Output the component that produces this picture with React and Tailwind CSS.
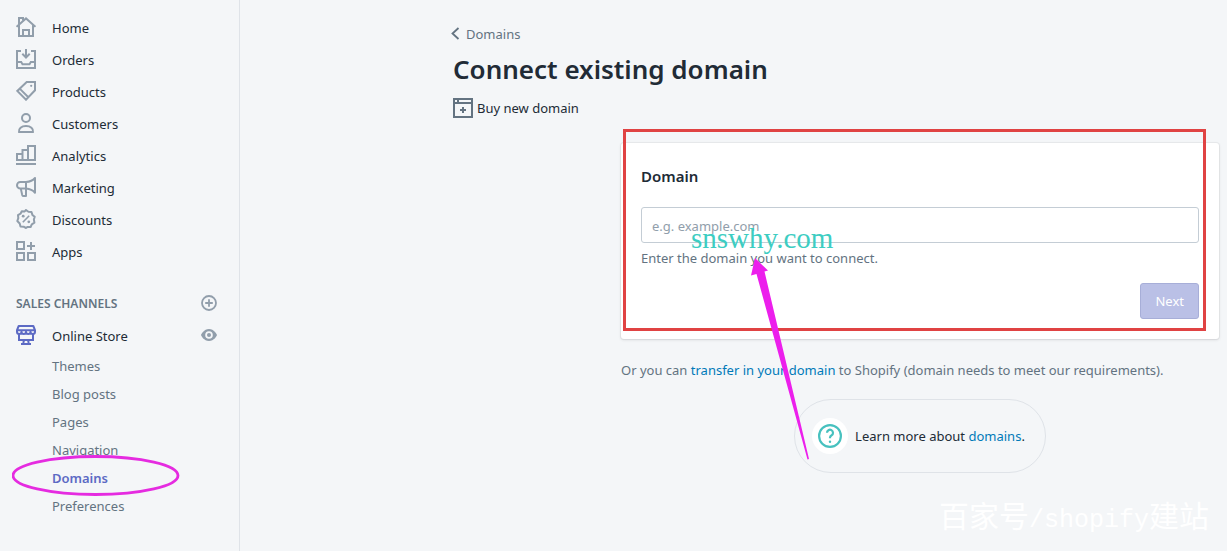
import React from "react";

function Icon({ children, className = "" }) {
  return (
    <svg
      viewBox="0 0 20 20"
      className={`w-5 h-5 shrink-0 ${className}`}
      fill="none"
      stroke="currentColor"
      strokeWidth="2"
      aria-hidden="true"
    >
      {children}
    </svg>
  );
}

const navItems = [
  {
    label: "Home",
    icon: (
      <>
        <path d="M.5 9.800 10 1.400l9.500 8.400M3 8v11h14V8" />
        <path d="M7 19v-6h6v6M3 7.500V1h4v2.500" />
      </>
    ),
  },
  {
    label: "Orders",
    icon: (
      <>
        <path d="M5 2H1v17h18V2h-4M1 13h4.200l1.300 2.200h7L14.800 13H19" />
        <path d="M10 0v8M6.300 4.800 10 8.500l3.700-3.700" />
      </>
    ),
  },
  {
    label: "Products",
    icon: (
      <>
        <path d="M10.700 1H19v8.300L10 18.700 1.300 9.900zM3.700 7.600l8.900 8.900" />
        <circle cx="15.200" cy="4.800" r="1.100" fill="currentColor" stroke="none" />
      </>
    ),
  },
  {
    label: "Customers",
    icon: (
      <>
        <circle cx="10" cy="5" r="4" />
        <path d="M3 19c-.6-3.600 2.400-6 7-6s7.600 2.400 7 6z" strokeLinejoin="round" />
      </>
    ),
  },
  {
    label: "Analytics",
    icon: <path d="M1 15V9h5.500v6M6.500 15V5H12v10M12 15V1h7v14zM0 15h13M0 19h20" />,
  },
  {
    label: "Marketing",
    icon: (
      <>
        <path d="M10 5H4.300a3.300 3.300 0 0 0 0 6.600H10zM10 5c4-.3 7-1.600 9-4v14.800c-2-2.500-5-3.900-9-4.200" strokeLinejoin="round" />
        <path d="M4.800 11.600 6.200 17.900c.2.800.8 1.100 1.500 1.100H10v-7.400" strokeLinejoin="round" />
      </>
    ),
  },
  {
    label: "Discounts",
    icon: (
      <>
        <path d="m10 1 2.400 1.700 3.100.3.900 2.900 2.300 1.900-.8 2.800.5 3.100-2.600 1.600-1.200 2.700-3-.1L10 19l-2.400-1.300-3.100-.3-.8-2.900L1.300 12l1-2.800L2 6.100l2.500-1.400L5.800 2.200l2.900.2z" strokeLinejoin="round" />
        <path d="m6.800 13.200 6.400-6.400" strokeWidth="1.600" />
        <circle cx="7.200" cy="7.200" r="1.400" fill="currentColor" stroke="none" />
        <circle cx="12.800" cy="12.800" r="1.400" fill="currentColor" stroke="none" />
      </>
    ),
  },
  {
    label: "Apps",
    icon: <path d="M1 1h7v7H1zM1 12h7v7H1zM12 12h7v7h-7zM15 1v8M11 5h8" />,
  },
];

const storeLinks = ["Themes", "Blog posts", "Pages", "Navigation", "Domains", "Preferences"];

function Sidebar() {
  return (
    <aside className="w-60 shrink-0 border-r border-[#dfe3e8] px-4 pt-3 text-[#212b36]">
      <nav>
        <ul>
          {navItems.map((item) => (
            <li key={item.label}>
              <a href="#" className="flex h-8 items-center gap-4">
                <span className="pb-0.5 text-[#919eab]">
                  <Icon>{item.icon}</Icon>
                </span>
                {item.label}
              </a>
            </li>
          ))}
        </ul>

        <div className="mt-5 flex h-8 items-center justify-between pr-1.5">
          <h2 className="text-xs font-semibold text-[#637381]">SALES CHANNELS</h2>
          <button type="button" aria-label="Add sales channel" className="pb-0.5 text-[#919eab]">
            <svg viewBox="0 0 16 16" className="w-4 h-4" fill="none" stroke="currentColor" strokeWidth="1.800">
              <circle cx="8" cy="8" r="7" />
              <path d="M8 4.200v7.600M4.200 8h7.600" />
            </svg>
          </button>
        </div>

        <div className="flex h-8 items-center justify-between pr-1.5">
          <a href="#" className="flex items-center gap-4">
            <span className="pb-0.5 text-[#5c6ac4]">
              <Icon>
                <path d="M2.700 1h14.600L19 5.200v1.600a2.250 2.250 0 0 1-4.500 0 2.250 2.250 0 0 1-4.500 0 2.250 2.250 0 0 1-4.500 0 2.250 2.250 0 0 1-4.500 0V5.200zM1 5.200h18" strokeLinejoin="round" />
                <path d="M3 9v6h14V9M8 15l-.7 3M12 15l.7 3M5 19h10" />
              </Icon>
            </span>
            Online Store
          </a>
          <button type="button" aria-label="View your online store" className="pb-0.5 text-[#919eab]">
            <svg viewBox="0 0 16 16" className="w-4 h-4">
              <path
                fill="currentColor"
                fillRule="evenodd"
                d="M8 2C3 2 .2 7 0 8c.2 1 3 6 8 6s7.800-5 8-6c-.2-1-3-6-8-6zm0 9.800a3.800 3.800 0 1 1 0-7.600 3.800 3.800 0 0 1 0 7.600z"
              />
              <circle cx="8" cy="8" r="2" fill="currentColor" />
            </svg>
          </button>
        </div>

        <ul className="pl-9 text-[#637381]">
          {storeLinks.map((label) => (
            <li key={label} className="relative">
              <a
                href="#"
                className={`flex h-7 items-center ${label === "Domains" ? "font-semibold text-[#5c6ac4]" : ""}`}
              >
                {label}
              </a>
              {label === "Domains" && (
                <svg
                  viewBox="0 0 168 42"
                  className="pointer-events-none absolute -left-10 -top-[9px] h-[42px] w-[168px]"
                  fill="none"
                  stroke="#e52be0"
                  strokeWidth="2.800"
                >
                  <ellipse cx="83.500" cy="20.500" rx="82.500" ry="19" />
                </svg>
              )}
            </li>
          ))}
        </ul>
      </nav>
    </aside>
  );
}

function DomainCard() {
  return (
    <form className="relative rounded-[3px] bg-white px-5 pt-[19px] pb-5 shadow-[0_0_0_1px_rgba(63,63,68,0.05),0_1px_3px_0_rgba(63,63,68,0.15)]">
      <label htmlFor="domain" className="block text-[15px] leading-7 font-semibold">
        Domain
      </label>
      <input
        id="domain"
        type="text"
        placeholder="e.g. example.com"
        className="mt-[17px] block h-9 w-full rounded-[3px] border border-[#c4cdd5] bg-white px-[10px] pt-0.5 placeholder:text-[#919eab]"
      />
      <p className="mt-[5px] leading-5 text-[#637381]">Enter the domain you want to connect.</p>
      <div className="mt-[15px] flex justify-end">
        <button
          type="button"
          className="h-9 rounded-[3px] border border-[#a7aed8] bg-[#bac0e6] px-3.5 text-white"
        >
          Next
        </button>
      </div>

      {/* Annotations */}
      <div className="pointer-events-none absolute -top-3.5 right-[13px] bottom-2 left-0.5 border-3 border-[#e04343]" />
      <span className="pointer-events-none absolute top-[79px] left-[70px] font-['Liberation_Serif',serif] text-[29px] leading-8 text-[#3dcdc2]">
        snswhy.com
      </span>
      <svg
        viewBox="0 0 60 204"
        className="pointer-events-none absolute top-[114px] left-[129px] z-10 h-[204px] w-[60px]"
        fill="#ec1fec"
      >
        <path d="M5 1 18 13.500l-3.500 1L59 202l-1.500.5L6.500 17 1 18.500z" />
      </svg>
    </form>
  );
}

function App() {
  return (
    <div className="relative flex min-h-screen bg-[#f4f6f8] font-['Noto_Sans','Open_Sans',sans-serif] text-[13px] leading-5 text-[#212b36]">
      <Sidebar />

      <main className="min-w-0 flex-1 pt-6 pr-2 pl-[213px]">
        <a href="#" className="-ml-0.5 flex items-center gap-1.5 text-[#637381]">
          <svg viewBox="0 0 9 14" className="h-[14px] w-[9px]" fill="none" stroke="currentColor" strokeWidth="1.800">
            <path d="M7.500 1 1.500 6.500l6 5.500" />
          </svg>
          Domains
        </a>
        <h1 className="mt-[7px] text-[26px] leading-9 font-semibold">Connect existing domain</h1>
        <button type="button" className="mt-[11px] flex items-center gap-1">
          <Icon className="text-[#637381]">
            <path d="M1 1h18v18H1zM1 5h18M5 1v4M10 9v6M7 12h6" />
          </Icon>
          Buy new domain
        </button>

        <section className="mt-[25px] ml-[168px]">
          <DomainCard />
          <p className="mt-[21px] text-[#637381]">
            Or you can{" "}
            <a href="#" className="text-[#007ab8]">
              transfer in your domain
            </a>{" "}
            to Shopify (domain needs to meet our requirements).
          </p>

          <div className="mt-[19px] flex justify-center">
            <div className="flex items-center gap-[7px] rounded-full border border-[#dfe3e8] py-[18px] pr-5 pl-[17px]">
              <span className="rounded-full bg-white p-1.5">
                <svg viewBox="0 0 24 24" className="h-6 w-6" fill="none" stroke="#47c1bf" strokeWidth="2.200">
                  <circle cx="12" cy="12" r="10.900" />
                  <path d="M9 8.800a3 3 0 1 1 4.600 2.500c-1 .6-1.600 1.100-1.600 2.300v.6" />
                  <circle cx="12" cy="17.800" r="1.200" fill="#47c1bf" stroke="none" />
                </svg>
              </span>
              <p>
                Learn more about{" "}
                <a href="#" className="text-[#007ab8]">
                  domains
                </a>
                .
              </p>
            </div>
          </div>
        </section>
      </main>

      {/* Watermark */}
      <span className="pointer-events-none absolute right-[18px] bottom-2.5 font-['Noto_Sans_CJK_SC',sans-serif] text-[30px] leading-10 text-white">
        百家号<span className="font-['Liberation_Mono',monospace] text-[25px]">/shopify</span>建站
      </span>
    </div>
  );
}

export default App;
